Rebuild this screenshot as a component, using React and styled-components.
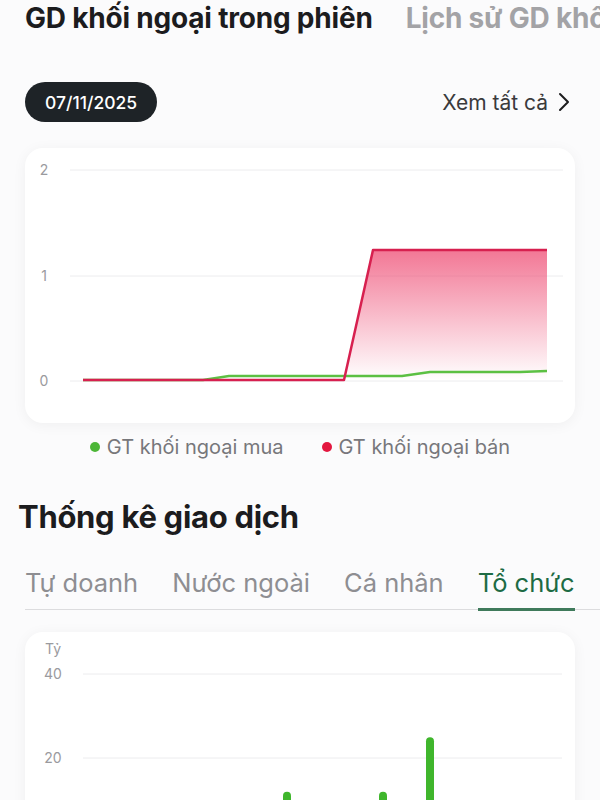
import React from "react";
import styled, { createGlobalStyle } from "styled-components";

const GlobalStyle = createGlobalStyle`
  body {
    margin: 0;
    background: #fbfbfc;
    font-family: Inter, "Noto Sans", sans-serif;
    color: #1c1c1e;
  }
`;

const Page = styled.div`
  width: 600px;
  height: 800px;
  overflow: hidden;
  padding: 0 25px;
  box-sizing: border-box;
`;

const TopTabs = styled.div`
  display: flex;
  gap: 33px;
  white-space: nowrap;
  height: 36px;
  align-items: center;
  margin-right: -25px;
  overflow: hidden;
`;

const TopTab = styled.div`
  font-size: 28px;
  font-weight: 700;
  letter-spacing: -0.2px;
  color: ${(p) => (p.active ? "#1c1c1e" : "#a3a3a6")};
`;

const Toolbar = styled.div`
  display: flex;
  justify-content: space-between;
  align-items: center;
  margin-top: 46px;
`;

const DatePill = styled.div`
  background: #1e2327;
  color: #fff;
  height: 40px;
  padding: 0 20px;
  border-radius: 20px;
  display: flex;
  align-items: center;
  font-size: 17.5px;
  font-weight: 500;
`;

const SeeAll = styled.div`
  display: flex;
  align-items: center;
  gap: 10px;
  font-size: 21px;
  color: #3a3a3c;
  margin-right: 5px;
`;

const Card = styled.div`
  background: #fff;
  border-radius: 18px;
  box-shadow: 0 2px 14px rgba(0, 0, 0, 0.05);
  margin-top: ${(p) => p.top}px;
  height: ${(p) => p.h}px;
  overflow: hidden;
`;

const Legend = styled.div`
  display: flex;
  justify-content: center;
  gap: 38px;
  margin-top: 12px;
  font-size: 20px;
  line-height: 24px;
  color: #77777b;
`;

const LegendItem = styled.div`
  display: flex;
  align-items: center;
  gap: 7px;
`;

const Dot = styled.span`
  width: 10px;
  height: 10px;
  border-radius: 50%;
  background: ${(p) => p.color};
`;

const SectionTitle = styled.h2`
  margin: 39px 0 0 -7px;
  font-size: 31px;
  line-height: 38px;
  font-weight: 700;
  letter-spacing: -0.3px;
`;

const Tabs = styled.div`
  display: flex;
  gap: 34px;
  margin-top: 32px;
  margin-right: -25px;
  border-bottom: 1.5px solid #dcdcde;
`;

const Tab = styled.div`
  font-size: 25.5px;
  line-height: 30px;
  padding-bottom: 10px;
  color: ${(p) => (p.active ? "#1d6b44" : "#8e8e92")};
  border-bottom: 3px solid ${(p) => (p.active ? "#3f7a5b" : "transparent")};
  margin-bottom: -2px;
`;

const axisText = { fontSize: 14, fill: "#9a9a9e", fontFamily: "Inter, sans-serif" };

function IntradayChart() {
  const pink = "58,232 319,232 348,102 522,102";
  const green = "58,232 178,232 204,228 377,228 405,224 495,224 522,223";
  return (
    <svg width="550" height="275" viewBox="0 0 550 275">
      <defs>
        <linearGradient id="sellFill" x1="0" y1="0" x2="0" y2="1">
          <stop offset="0" stopColor="#ee4a72" stopOpacity="0.75" />
          <stop offset="1" stopColor="#ee4a72" stopOpacity="0" />
        </linearGradient>
      </defs>
      {[
        [22, "2"],
        [128, "1"],
        [233, "0"],
      ].map(([y, t]) => (
        <g key={t}>
          <line x1="45" x2="538" y1={y} y2={y} stroke="#ececee" strokeWidth="1" />
          <text x="19" y={y + 5} textAnchor="middle" style={axisText}>
            {t}
          </text>
        </g>
      ))}
      <polygon points="319,232 348,102 522,102 522,232" fill="url(#sellFill)" />
      <polyline points={green} fill="none" stroke="#5cc043" strokeWidth="2.5" strokeLinejoin="round" />
      <polyline points={pink} fill="none" stroke="#d7204f" strokeWidth="2.5" strokeLinejoin="round" />
    </svg>
  );
}

function StatsChart() {
  const bars = [
    [262, 11],
    [358, 11],
    [405, 24],
  ];
  const yOf = (v) => 210 - v * 4.2;
  return (
    <svg width="550" height="240" viewBox="0 0 550 240">
      <text x="28" y="22" textAnchor="middle" style={axisText}>
        Tỷ
      </text>
      {[
        [40, "40"],
        [20, "20"],
      ].map(([v, t]) => (
        <g key={t}>
          <line x1="58" x2="537" y1={yOf(v)} y2={yOf(v)} stroke="#ececee" strokeWidth="1" />
          <text x="28" y={yOf(v) + 5} textAnchor="middle" style={axisText}>
            {t}
          </text>
        </g>
      ))}
      <line x1="58" x2="537" y1="210" y2="210" stroke="#ececee" strokeWidth="1" />
      {bars.map(([x, v]) => (
        <line
          key={x}
          x1={x}
          x2={x}
          y1={yOf(v)}
          y2={210}
          stroke="#3fb62c"
          strokeWidth="8"
          strokeLinecap="round"
        />
      ))}
    </svg>
  );
}

export default function App() {
  return (
    <>
      <GlobalStyle />
      <Page>
        <TopTabs>
          <TopTab active>GD khối ngoại trong phiên</TopTab>
          <TopTab>Lịch sử GD khối ngoại</TopTab>
        </TopTabs>

        <Toolbar>
          <DatePill>07/11/2025</DatePill>
          <SeeAll>
            Xem tất cả
            <svg width="12" height="20" viewBox="0 0 12 20">
              <path d="M2 2l8 8-8 8" fill="none" stroke="#1c1c1e" strokeWidth="2" strokeLinecap="round" strokeLinejoin="round" />
            </svg>
          </SeeAll>
        </Toolbar>

        <Card top={26} h={275}>
          <IntradayChart />
        </Card>

        <Legend>
          <LegendItem>
            <Dot color="#4cb637" />
            GT khối ngoại mua
          </LegendItem>
          <LegendItem>
            <Dot color="#e3173f" />
            GT khối ngoại bán
          </LegendItem>
        </Legend>

        <SectionTitle>Thống kê giao dịch</SectionTitle>

        <Tabs>
          <Tab>Tự doanh</Tab>
          <Tab>Nước ngoài</Tab>
          <Tab>Cá nhân</Tab>
          <Tab active>Tổ chức</Tab>
        </Tabs>

        <Card top={22} h={260}>
          <StatsChart />
        </Card>
      </Page>
    </>
  );
}
